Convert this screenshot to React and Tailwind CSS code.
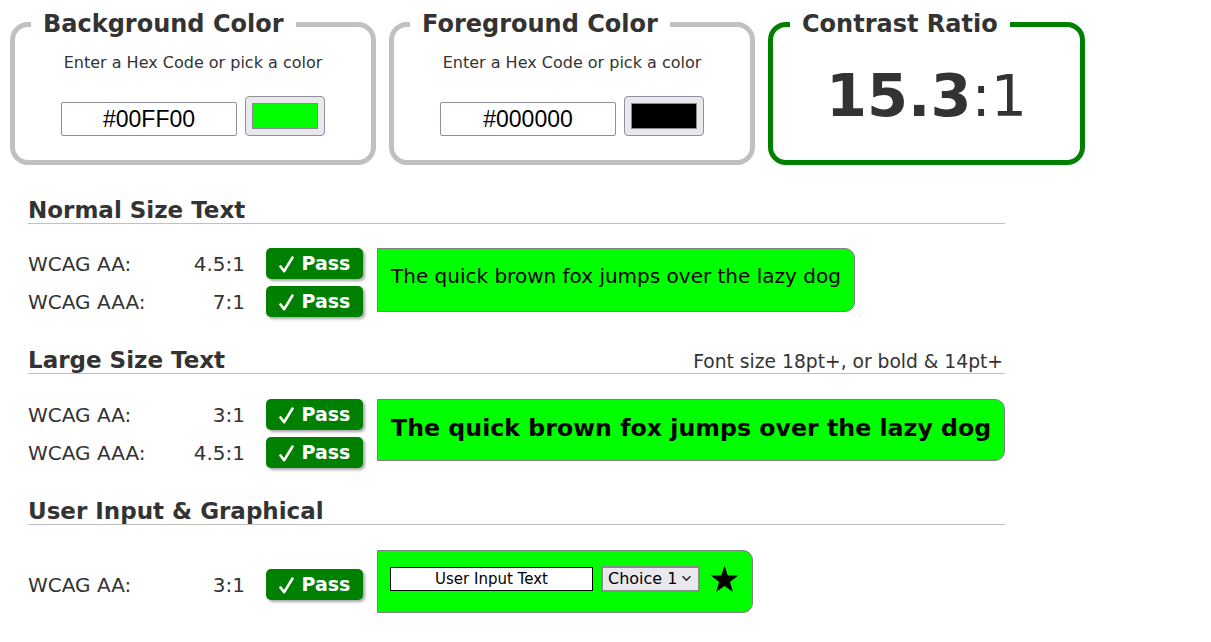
import React from "react";

function ColorBox({ title, hex, swatch }) {
  return (
    <fieldset className="w-[366px] h-[155px] border-[5px] border-[#c0c0c0] rounded-[18px] p-0 m-0">
      <legend className="ml-[16px] px-[12px] text-[24px] leading-[28px] font-bold text-[#333]">{title}</legend>
      <div className="pt-[15px] text-center text-[16px] leading-[20px] text-[#333]">Enter a Hex Code or pick a color</div>
      <div className="mt-[23px] flex items-end justify-center gap-[8px]">
        <input
          readOnly
          defaultValue={hex}
          className="w-[176px] h-[34px] border border-[#8f8f9d] rounded-[2px] bg-white text-center text-[23px] font-['Liberation_Sans',sans-serif] text-black outline-none"
        />
        <div className="w-[80px] h-[40px] bg-[#e9e9ed] border border-[#8f8f9d] rounded-[4px] pl-[6px] pt-[6px]">
          <div className="w-[66px] h-[26px] border border-[#8a8a8a]" style={{ background: swatch }} />
        </div>
      </div>
    </fieldset>
  );
}

function Badge() {
  return (
    <div className="ml-[21px] w-[97px] h-[31px] bg-[#008000] rounded-[5px] shadow-[2px_2px_3px_rgba(0,0,0,0.35)] flex items-center justify-center text-white font-bold text-[19px] leading-none">
      <svg width="15" height="17" viewBox="0 0 15 17" className="mr-[8px] mt-[1px]">
        <path d="M1.5 10.5 L5.2 15.2 L13.5 1.5" fill="none" stroke="#fff" strokeWidth="2.6" strokeLinecap="round" strokeLinejoin="round" />
      </svg>
      Pass
    </div>
  );
}

function Row({ label, value }) {
  return (
    <div className="flex items-center h-[31px] text-[20px] text-[#333]">
      <span className="w-[150px]">{label}</span>
      <span className="w-[67px] text-right">{value}</span>
      <Badge />
    </div>
  );
}

function SectionTitle({ children, right }) {
  return (
    <div className="flex items-baseline justify-between border-b border-[#c0c0c0] h-[26px]">
      <h2 className="text-[23px] leading-[25px] font-bold text-[#333]">{children}</h2>
      {right && <span className="text-[18.7px] leading-[25px] text-[#333] mr-[2px]">{right}</span>}
    </div>
  );
}

export default function App() {
  return (
    <div className="w-[1211px] h-[642px] bg-white font-['DejaVu_Sans',sans-serif] overflow-hidden">
      <div className="flex items-start gap-[13px] pl-[10px] pt-[10px]">
        <ColorBox title="Background Color" hex="#00FF00" swatch="#00ff00" />
        <ColorBox title="Foreground Color" hex="#000000" swatch="#000000" />
        <fieldset className="w-[317px] h-[155px] border-[5px] border-[#008000] rounded-[18px] p-0 m-0">
          <legend className="ml-[17px] px-[12px] text-[24px] leading-[28px] font-bold text-[#333]">Contrast Ratio</legend>
          <div className="text-center text-[#333] leading-[68px] pt-[24px] whitespace-nowrap">
            <span className="text-[59px] font-bold">15.3</span>
            <span className="text-[57px]">:1</span>
          </div>
        </fieldset>
      </div>

      <div className="ml-[28px] w-[977px]">
        <div className="mt-[33px]">
          <SectionTitle>Normal Size Text</SectionTitle>
          <div className="mt-[24px] flex items-start">
            <div className="flex flex-col gap-[7px]">
              <Row label="WCAG AA:" value="4.5:1" />
              <Row label="WCAG AAA:" value="7:1" />
            </div>
            <div className="ml-[14px] h-[64px] border border-[#808080] rounded-r-[10px] bg-[#00ff00] px-[13px] pt-[14px] text-[20px] leading-[26px] text-black whitespace-nowrap">
              The quick brown fox jumps over the lazy dog
            </div>
          </div>
        </div>

        <div className="mt-[31px]">
          <SectionTitle right="Font size 18pt+, or bold & 14pt+">Large Size Text</SectionTitle>
          <div className="mt-[25px] flex items-start">
            <div className="flex flex-col gap-[7px]">
              <Row label="WCAG AA:" value="3:1" />
              <Row label="WCAG AAA:" value="4.5:1" />
            </div>
            <div className="ml-[14px] h-[62px] border border-[#808080] rounded-r-[10px] bg-[#00ff00] px-[13px] pt-[13px] text-[23.7px] leading-[30px] font-bold text-black whitespace-nowrap">
              The quick brown fox jumps over the lazy dog
            </div>
          </div>
        </div>

        <div className="mt-[31px]">
          <SectionTitle>User Input & Graphical</SectionTitle>
          <div className="mt-[25px] flex items-start">
            <div className="mt-[19px]">
              <Row label="WCAG AA:" value="3:1" />
            </div>
            <div className="ml-[14px] h-[63px] border border-[#808080] rounded-r-[10px] bg-[#00ff00] pl-[12px] pr-[13px] flex items-center gap-[8px] pb-[6px]">
              <input
                readOnly
                defaultValue="User Input Text"
                className="w-[203px] h-[24px] border border-black bg-white text-center text-[15px] text-black outline-none font-['DejaVu_Sans',sans-serif]"
              />
              <div className="w-[99px] h-[26px] border-2 border-[#8a8a8a] bg-[#e9e9ed] flex items-center justify-between pl-[5px] pr-[6px] text-[16px] text-black whitespace-nowrap">
                <span>Choice 1</span>
                <svg width="11" height="7" viewBox="0 0 12 8" className="shrink-0">
                  <path d="M1.5 1.5 L6 6 L10.5 1.5" fill="none" stroke="#222" strokeWidth="1.6" />
                </svg>
              </div>
              <svg width="29" height="28" viewBox="0 0 24 23" className="ml-[2px]">
                <path d="M12 0.5 L14.8 8.6 L23.4 8.7 L16.5 13.9 L19 22.2 L12 17.2 L5 22.2 L7.5 13.9 L0.6 8.7 L9.2 8.6 Z" fill="#000" />
              </svg>
            </div>
          </div>
        </div>
      </div>
    </div>
  );
}
